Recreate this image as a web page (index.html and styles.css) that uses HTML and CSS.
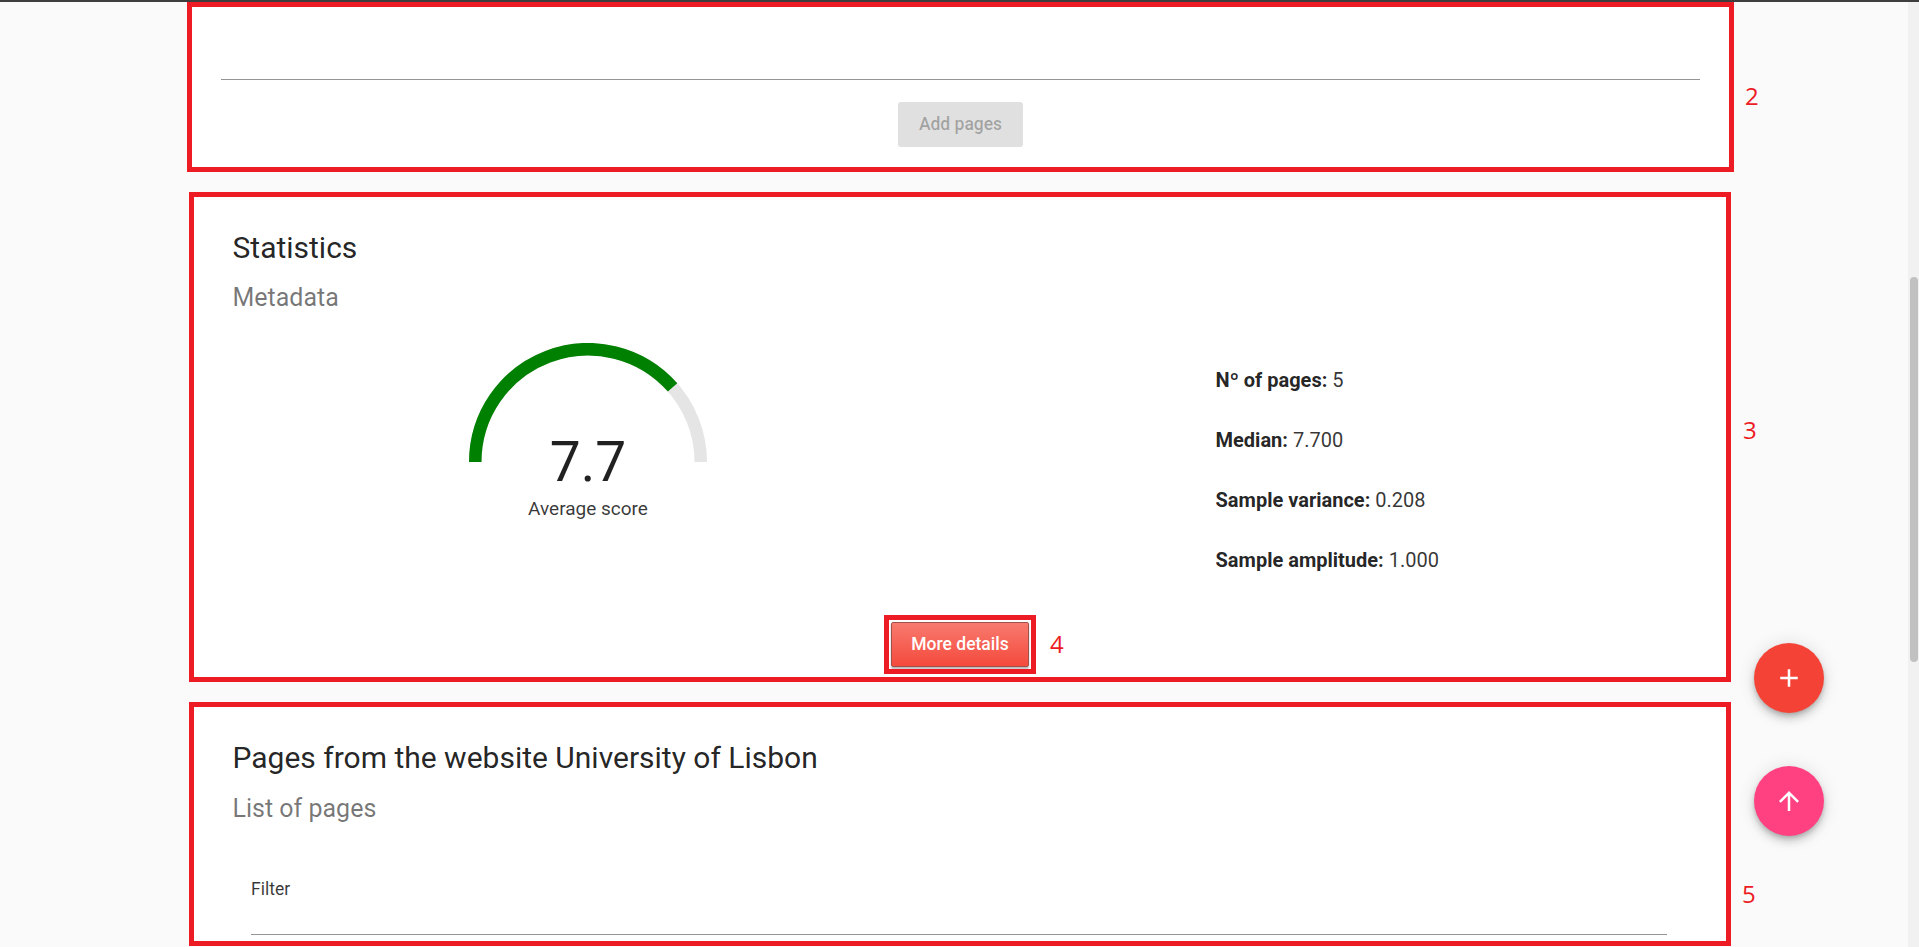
FILE: index.html
```html
<!DOCTYPE html>
<html lang="en">
<head>
<meta charset="utf-8">
<title>Statistics</title>
<link rel="stylesheet" href="styles.css">
</head>
<body>
<div class="topbar"></div>
<div class="layout">
  <main class="content">
    <div class="column">
      <section class="card card-add">
        <div class="field"></div>
        <div class="actions">
          <button class="btn btn-disabled" disabled>Add pages</button>
        </div>
        <span class="annot-num num-2">2</span>
      </section>

      <section class="card card-stats">
        <h2 class="card-title">Statistics</h2>
        <div class="card-subtitle">Metadata</div>
        <div class="stats-row">
          <div class="gauge-col">
            <div class="gauge">
              <svg class="gauge-svg" width="238" height="119" viewBox="0 0 238 119">
                <path d="M6.25 119 A112.75 112.75 0 0 1 231.75 119" fill="none" stroke="#e5e5e5" stroke-width="12.5"/>
                <path d="M6.25 119 A112.75 112.75 0 0 1 203.57 44.44" fill="none" stroke="#008000" stroke-width="12.5"/>
              </svg>
              <div class="gauge-value">7.7</div>
            </div>
            <div class="gauge-label">Average score</div>
          </div>
          <div class="list-col">
            <ul class="stats-list">
              <li><b>Nº of pages:</b> 5</li>
              <li><b>Median:</b> 7.700</li>
              <li><b>Sample variance:</b> 0.208</li>
              <li><b>Sample amplitude:</b> 1.000</li>
            </ul>
          </div>
        </div>
        <div class="actions actions-stats">
          <span class="btn-wrap">
            <button class="btn btn-primary">More details</button>
            <span class="annot-num num-4">4</span>
          </span>
        </div>
        <span class="annot-num num-3">3</span>
      </section>

      <section class="card card-pages">
        <h2 class="card-title">Pages from the website University of Lisbon</h2>
        <div class="card-subtitle">List of pages</div>
        <div class="filter-field">
          <label class="filter-label">Filter</label>
          <div class="filter-input"></div>
        </div>
        <span class="annot-num num-5">5</span>
      </section>
    </div>
  </main>
  <div class="scrollbar"><div class="scroll-thumb"></div></div>
</div>

<div class="fabs">
  <button class="fab fab-add" aria-label="Add">
    <svg width="30" height="30" viewBox="0 0 24 24"><path fill="#fff" d="M19 13h-6v6h-2v-6H5v-2h6V5h2v6h6v2z"/></svg>
  </button>
  <button class="fab fab-up" aria-label="Back to top">
    <svg width="30" height="30" viewBox="0 0 24 24"><path fill="#fff" d="M4 12l1.41 1.41L11 7.83V20h2V7.83l5.58 5.59L20 12l-8-8-8 8z"/></svg>
  </button>
</div>
</body>
</html>
```

FILE: styles.css
```css
* { box-sizing: border-box; }

html, body {
  margin: 0;
  height: 947px;
  overflow: hidden;
}

body {
  background: #fafafa;
  font-family: Roboto, "Noto Sans", sans-serif;
  color: rgba(0, 0, 0, 0.87);
}

.topbar {
  height: 2px;
  background: #3e3e3e;
}

.layout {
  display: flex;
  height: 945px;
}

.content {
  flex: 1;
  padding-left: 194px;
}

.column {
  width: 1532px;
  display: flex;
  flex-direction: column;
  gap: 30px;
  padding-top: 5px;
}

.card {
  position: relative;
  background: #fff;
  box-shadow: 0 2px 1px -1px rgba(0,0,0,.2), 0 1px 1px 0 rgba(0,0,0,.14), 0 1px 3px 0 rgba(0,0,0,.12);
  outline: 5px solid #ed1c24;
}

/* card 2 */
.card-add {
  margin: 0 -3px 0 -2px;
  padding: 30px 29px 20px;
}

.field {
  height: 43px;
  border-bottom: 1px solid #949494;
}

.actions {
  display: flex;
  justify-content: center;
}

.card-add .actions {
  margin-top: 22px;
}

.btn {
  height: 45px;
  border: none;
  border-radius: 3px;
  font-family: Roboto, "Noto Sans", sans-serif;
  font-size: 17.5px;
  font-weight: 500;
  line-height: 45px;
  cursor: pointer;
}

.btn-disabled {
  width: 125px;
  padding: 0;
  background: #e0e0e0;
  color: rgba(0, 0, 0, 0.28);
  cursor: default;
}

/* card 3 */
.card-stats {
  padding: 33px 38.5px 10px;
}

.card-title {
  margin: 0;
  font-size: 30px;
  line-height: 36px;
  font-weight: 400;
  color: rgba(0, 0, 0, 0.87);
}

.card-subtitle {
  margin-top: 17px;
  font-size: 25px;
  line-height: 29px;
  color: rgba(0, 0, 0, 0.54);
}

.stats-row {
  margin-top: 31px;
  display: grid;
  grid-template-columns: 1fr 1fr;
}

.gauge-col {
  display: flex;
  flex-direction: column;
  align-items: center;
  padding-right: 16.5px;
}

.gauge {
  position: relative;
  width: 238px;
  height: 119px;
}

.gauge-svg {
  display: block;
}

.gauge-value {
  position: absolute;
  left: 0;
  right: 0;
  top: 92px;
  text-align: center;
  font-size: 55px;
  line-height: 55px;
  font-weight: 400;
  color: rgba(0, 0, 0, 0.87);
}

.gauge-label {
  margin-top: 36px;
  font-size: 19px;
  line-height: 21px;
  color: rgba(0, 0, 0, 0.78);
}

.list-col {
  display: flex;
  justify-content: center;
  padding-top: 25px;
  padding-left: 7px;
}

.stats-list {
  list-style: none;
  margin: 0;
  padding: 0;
  font-size: 20px;
  line-height: 24px;
  color: rgba(0, 0, 0, 0.8);
}

.stats-list li + li {
  margin-top: 36px;
}

.stats-list b {
  font-weight: 700;
  color: rgba(0, 0, 0, 0.87);
}

.actions-stats {
  margin-top: 50px;
}

.btn-wrap {
  position: relative;
  display: inline-block;
  outline: 5px solid #ed1c24;
  outline-offset: 2px;
}

.btn-primary {
  display: block;
  width: 138px;
  padding: 0;
  color: #fff;
  background: linear-gradient(#f87a6f, #f44a3c);
  border: 1px solid #a0504a;
  border-radius: 2px;
  line-height: 43px;
  box-shadow: 0 2px 2px rgba(0,0,0,.28);
}

/* card 5 */
.card-pages {
  padding: 33px 38.5px 6px;
}

.card-pages .card-subtitle {
  margin-top: 18px;
}

.filter-field {
  margin: 56px 20.5px 0 18.5px;
  border-bottom: 1px solid #949494;
}

.filter-label {
  display: block;
  font-size: 17.5px;
  line-height: 21px;
  color: rgba(0, 0, 0, 0.78);
}

.filter-input {
  height: 34px;
}

/* annotation numbers */
.annot-num {
  position: absolute;
  left: calc(100% + 16px);
  font-family: "Open Sans", "Liberation Sans", sans-serif;
  font-size: 24px;
  line-height: 24px;
  color: #ed1c24;
}

.num-2 { top: 77px; left: calc(100% + 16px); }
.num-3 { top: 221px; left: calc(100% + 17px); }
.num-5 { top: 175px; left: calc(100% + 16px); }
.num-4 { top: 10px; left: calc(100% + 21px); }

/* scrollbar */
.scrollbar {
  width: 11px;
  background: #f1f1f1;
  padding: 275px 1px 0 2px;
}

.scroll-thumb {
  height: 385px;
  border-radius: 4px;
  background: #c1c1c1;
}

/* floating action buttons */
.fabs {
  position: fixed;
  right: 95px;
  top: 643px;
  display: flex;
  flex-direction: column;
  gap: 53px;
}

.fab {
  width: 70px;
  height: 70px;
  border-radius: 50%;
  border: none;
  padding: 0;
  display: flex;
  align-items: center;
  justify-content: center;
  box-shadow: 0 3px 5px -1px rgba(0,0,0,.2), 0 6px 10px 0 rgba(0,0,0,.14), 0 1px 18px 0 rgba(0,0,0,.12);
  cursor: pointer;
}

.fab svg { display: block; }

.fab-add { background: #f44336; }
.fab-up { background: #ff4081; }
```
